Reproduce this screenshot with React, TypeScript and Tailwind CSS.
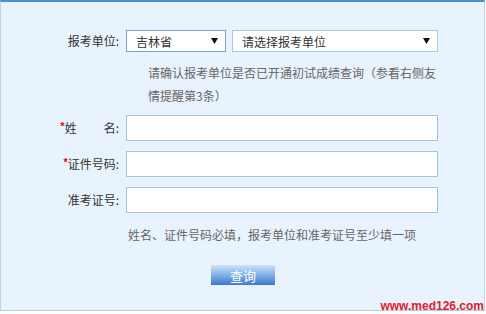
import React from "react"

const font = { fontFamily: '"Noto Sans CJK SC", "Microsoft YaHei", sans-serif' }

function Arrow() {
  return (
    <svg width="7" height="6" viewBox="0 0 7 6" className="shrink-0">
      <path d="M0 0h7L3.5 6z" fill="#111" />
    </svg>
  )
}

function FakeSelect({ text, width, border }: { text: string; width: string; border: string }) {
  return (
    <div className={`flex h-[22px] items-center justify-between border bg-white pl-[9px] pr-[7px] ${width} ${border}`}>
      <span className="pt-[2px] text-[12px] leading-none text-[#333]">{text}</span>
      <Arrow />
    </div>
  )
}

function Row({ label, children }: { label: React.ReactNode; children: React.ReactNode }) {
  return (
    <div className="flex items-center">
      <div className="flex w-[118px] shrink-0 items-center justify-end text-[12px] text-[#333]">{label}</div>
      <div className="ml-[7px]">{children}</div>
    </div>
  )
}

const Star = () => (
  <span
    className="-mt-[3px] text-[11px] font-bold text-[#e00]"
    style={{ fontFamily: '"Liberation Sans", Arial, sans-serif' }}
  >
    *
  </span>
)

export default function App() {
  return (
    <div className="relative h-[314px] w-[486px] bg-white" style={font}>
      <div className="h-[311px] w-[485px] border-x border-b border-t-2 border-x-[#bdd5ee] border-b-[#b3cde8] border-t-[#4a8fd4] bg-[#e9f3fd] pt-[28px]">
        <Row label={<span>报考单位:</span>}>
          <div className="flex gap-[6px]">
            <FakeSelect text="吉林省" width="w-[100px]" border="border-[#7c9fd6]" />
            <FakeSelect text="请选择报考单位" width="w-[206px]" border="border-[#a9c8e3]" />
          </div>
        </Row>

        <p className="ml-[147px] mt-[9px] text-[12px] leading-[23px] text-[#666]">
          请确认报考单位是否已开通初试成绩查询（参看右侧友
          <br />
          情提醒第3条）
        </p>

        <div className="mt-[8px] flex flex-col gap-[10px]">
          <Row
            label={
              <>
                <Star />
                <span>姓</span>
                <span className="w-[27px]" />
                <span>名:</span>
              </>
            }
          >
            <div className="h-[26px] w-[312px] border border-[#a5c4e1] bg-white" />
          </Row>
          <Row
            label={
              <>
                <Star />
                <span>证件号码:</span>
              </>
            }
          >
            <div className="h-[26px] w-[312px] border border-[#a5c4e1] bg-white" />
          </Row>
          <Row label={<span>准考证号:</span>}>
            <div className="h-[26px] w-[312px] border border-[#a5c4e1] bg-white" />
          </Row>
        </div>

        <p className="ml-[127px] mt-[12px] text-[12px] leading-[20px] text-[#666]">
          姓名、证件号码必填，报考单位和准考证号至少填一项
        </p>

        <div className="ml-[210px] mt-[20px]">
          <button className="flex h-[20px] w-[64px] items-center justify-center bg-gradient-to-b from-[#cfe2f7] via-[#7fb0e6] to-[#3a7bc8] text-[13px] leading-none text-white">
            查询
          </button>
        </div>
      </div>

      <div
        className="absolute bottom-[2px] right-[2px] text-[12px] font-bold leading-none text-[#e0202a]"
        style={{ fontFamily: '"Liberation Sans", Arial, sans-serif' }}
      >
        www.med126.com
      </div>
    </div>
  )
}
